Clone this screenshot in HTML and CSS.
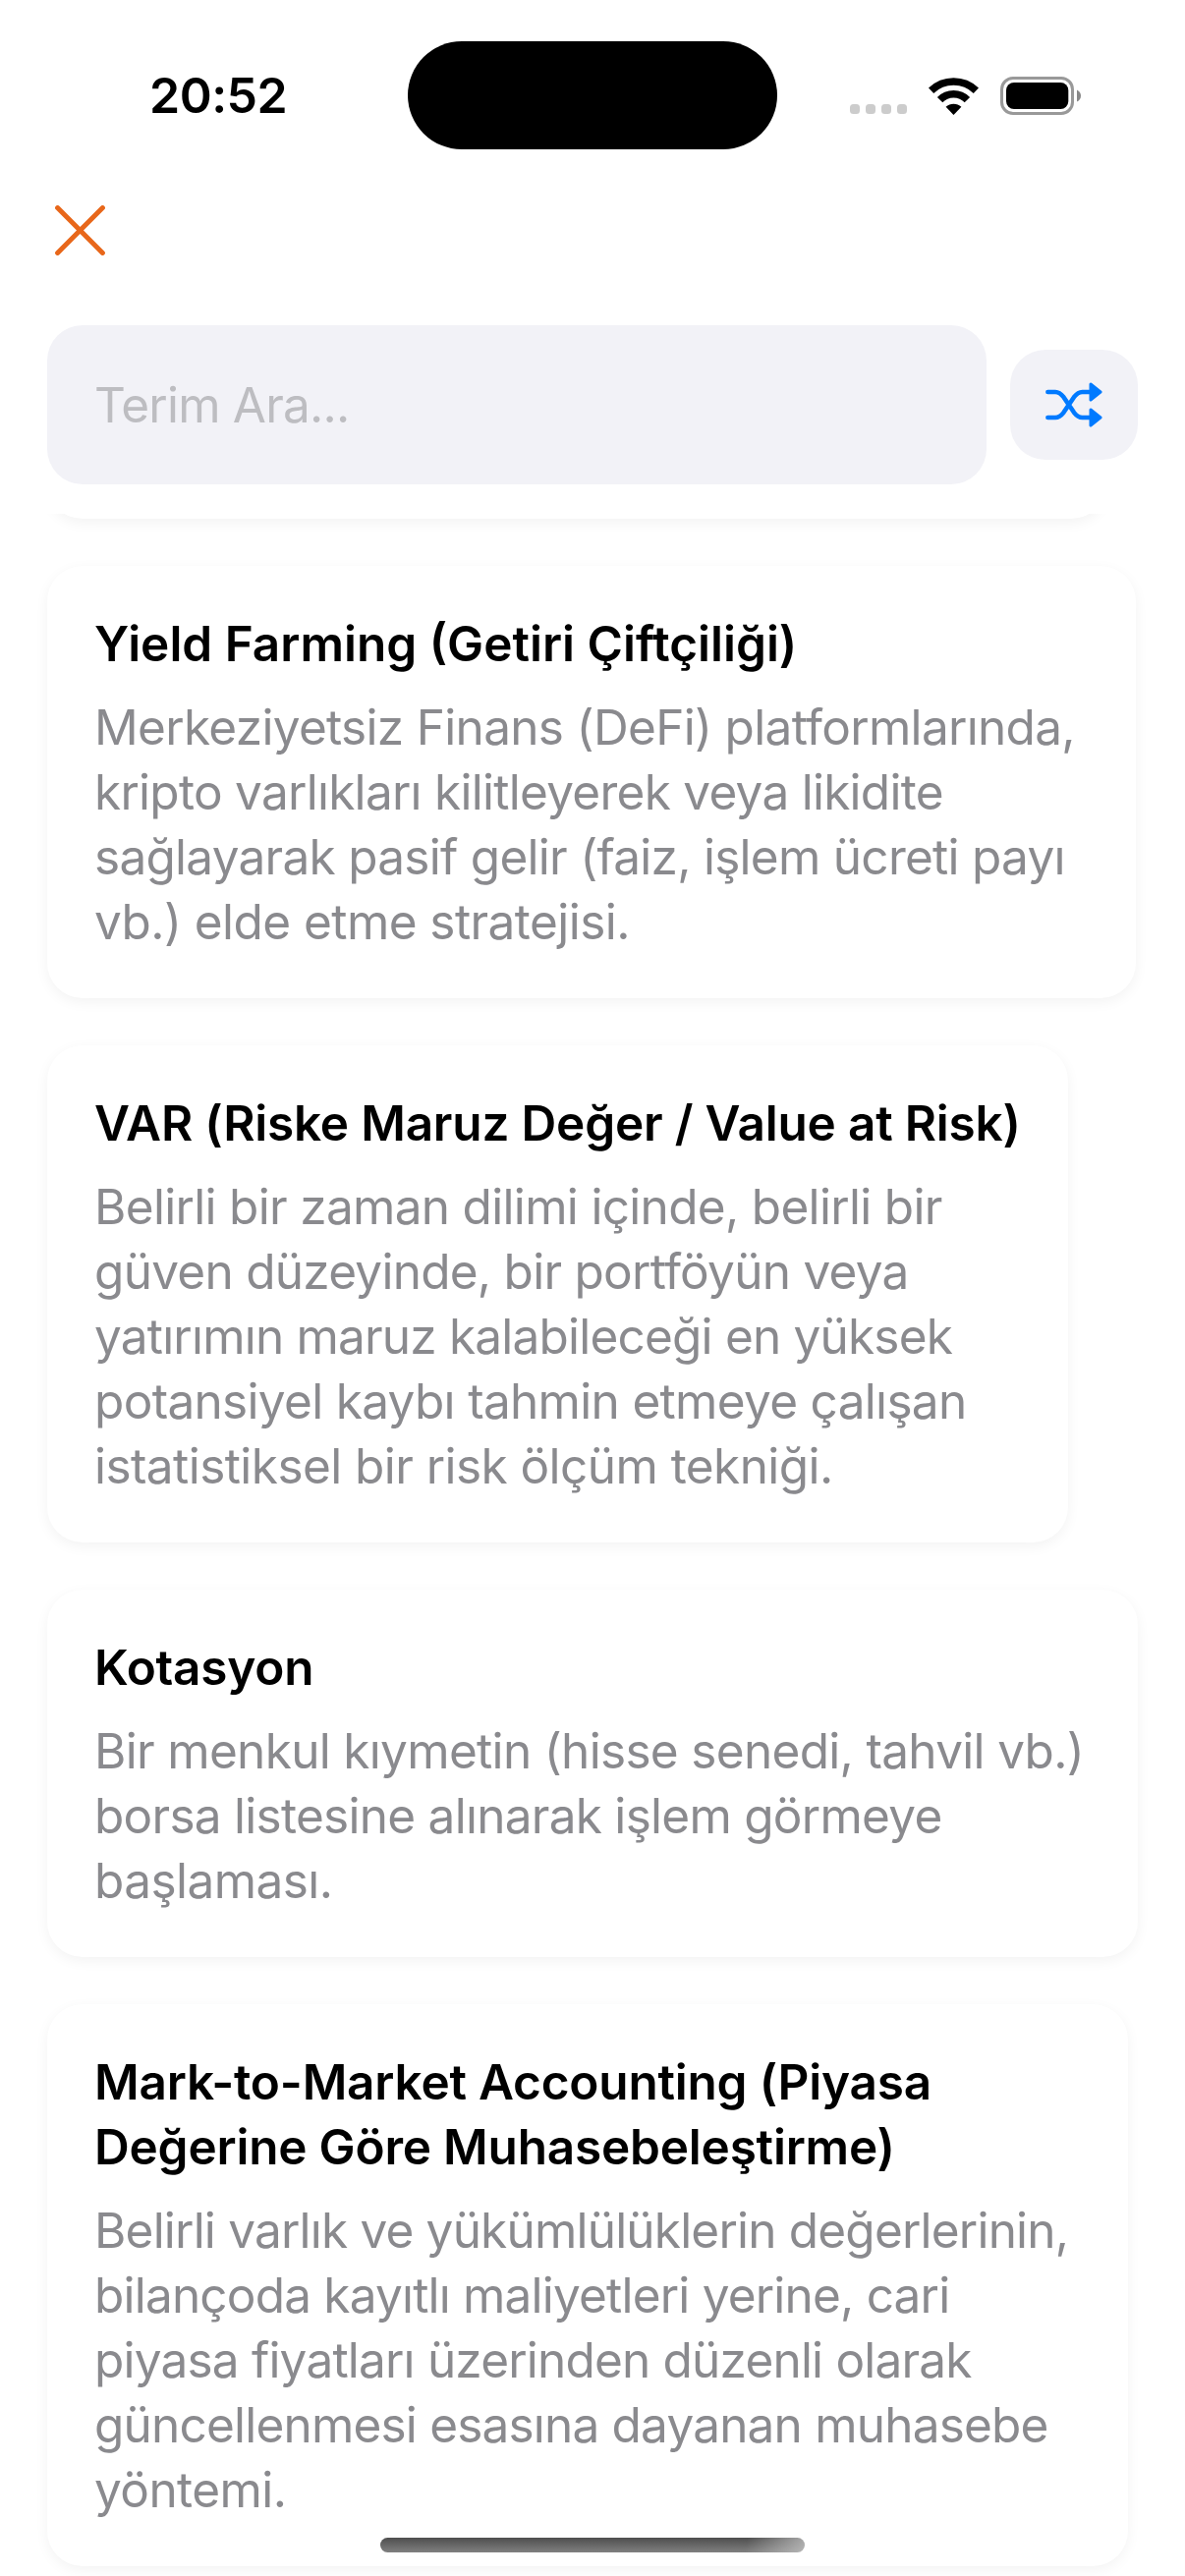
FILE: index.html
```html
<!DOCTYPE html>
<html lang="tr">
<head>
<meta charset="utf-8">
<title>Terimler</title>
<link rel="stylesheet" href="styles.css">
</head>
<body>
<div class="screen">
  <header class="status">
    <div class="time">20:52</div>
    <div class="island"></div>
    <div class="indicators">
      <div class="dots"><i></i><i></i><i></i><i></i></div>
      <svg class="wifi" width="51" height="38" viewBox="0 0 51 38">
        <g fill="none" stroke="#000" stroke-width="7.6">
          <path d="M2.6 13.2A33 33 0 0 1 48.4 13.2"/>
          <path d="M11.6 22.6A19.5 19.5 0 0 1 39.4 22.6"/>
        </g>
        <path d="M25.5 38L17.6 29.8A11.5 11.5 0 0 1 33.4 29.8Z"/>
      </svg>
      <svg class="battery" width="83" height="39" viewBox="0 0 83 39">
        <rect x="1.5" y="1.5" width="72" height="36" rx="11.5" fill="none" stroke="#999" stroke-width="3"/>
        <rect x="6" y="6" width="63.3" height="27" rx="8"/>
        <path d="M78 13.5Q82 15.5 82 19.5T78 25.5Z" fill="#888"/>
      </svg>
    </div>
  </header>
  <nav class="nav">
    <svg width="51" height="51" viewBox="0 0 51 51"><path d="M2.6 2.6L48.4 48.4M48.4 2.6L2.6 48.4" fill="none" stroke="#e8671a" stroke-width="5" stroke-linecap="round"/></svg>
  </nav>
  <div class="search">
    <div class="field">Terim Ara...</div>
    <div class="shuffle">
      <svg width="58" height="46" viewBox="0 0 58 46">
        <path d="M2.4 10H10C14 10 16 12 18.5 15.2L29 30.8C31.5 34 33.5 36 37.5 36H46M2.4 36H10C14 36 16 34 18.5 30.8L29 15.2C31.5 12 33.5 10 37.5 10H46" fill="none" stroke="#007aff" stroke-width="4.6" stroke-linecap="round" stroke-linejoin="round"/>
        <path d="M46 2L56 10L46 18ZM46 28L56 36L46 44Z" fill="#007aff" stroke="#007aff" stroke-width="3" stroke-linejoin="round"/>
      </svg>
    </div>
  </div>
  <main class="list">
    <article class="card card-scrolled"></article>
    <article class="card card-yield">
      <h2>Yield Farming (Getiri Çiftçiliği)</h2>
      <p><span class="snug">Merkeziyetsiz Finans (DeFi) platformlarında,</span><span class="snugger">kripto varlıkları kilitleyerek veya likidite</span><span class="snugger">sağlayarak pasif gelir (faiz, işlem ücreti payı</span><span class="loose">vb.) elde etme stratejisi.</span></p>
    </article>
    <article class="card card-var">
      <h2>VAR (Riske Maruz Değer / Value at Risk)</h2>
      <p><span class="snug">Belirli bir zaman dilimi içinde, belirli bir</span><span class="snugger">güven düzeyinde, bir portföyün veya</span><span class="tight">yatırımın maruz kalabileceği en yüksek</span><span class="snug">potansiyel kaybı tahmin etmeye çalışan</span><span class="loose">istatistiksel bir risk ölçüm tekniği.</span></p>
    </article>
    <article class="card card-quote">
      <h2>Kotasyon</h2>
      <p><span class="snug">Bir menkul kıymetin (hisse senedi, tahvil vb.)</span><span class="snugger">borsa listesine alınarak işlem görmeye</span><span class="loose">başlaması.</span></p>
    </article>
    <article class="card card-mtm">
      <h2>Mark-to-Market Accounting (Piyasa<br>Değerine Göre Muhasebeleştirme)</h2>
      <p><span class="tight">Belirli varlık ve yükümlülüklerin değerlerinin,</span><span class="tight">bilançoda kayıtlı maliyetleri yerine, cari</span><span class="tight">piyasa fiyatları üzerinden düzenli olarak</span><span class="tight">güncellenmesi esasına dayanan muhasebe</span><span class="loose">yöntemi.</span></p>
    </article>
  </main>
  <div class="home-bar"></div>
</div>
</body>
</html>
```
FILE: styles.css
```css
* { box-sizing: border-box; margin: 0; padding: 0; }

body {
  background: #fff;
  font-family: Inter, "Liberation Sans", sans-serif;
  font-size: 49.5px;
  line-height: 66px;
  color: #000;
}

.screen {
  position: relative;
  display: flex;
  flex-direction: column;
  width: 1206px;
  height: 2622px;
  overflow: hidden;
}

.status {
  display: grid;
  grid-template-columns: 415px 376px 1fr;
  height: 194px;
  padding-top: 42px;
}

.time {
  padding: 22px 0 0 152px;
  font-size: 50px;
  font-weight: 600;
  letter-spacing: -0.5px;
}

.island { height: 110px; border-radius: 55px; background: #000; }

.indicators {
  display: flex;
  align-items: flex-start;
  padding: 36px 0 0 74px;
}

.dots { display: flex; gap: 6px; margin-top: 28px; }
.dots i { width: 10px; height: 10px; border-radius: 3.5px; background: #ccc; }
.wifi { margin: 1px 0 0 22px; }
.battery { margin-left: 22px; }

.nav { height: 137px; padding: 15px 0 0 56px; }
.nav svg { display: block; }

.search {
  display: flex;
  align-items: center;
  gap: 24px;
  height: 162px;
  padding: 0 48px;
}

.field {
  width: 956px;
  height: 162px;
  padding: 48px 48px 0;
  border-radius: 36px;
  background: #f2f2f7;
  color: #bdbdc1;
  letter-spacing: -0.8px;
}

.shuffle {
  display: flex;
  align-items: center;
  justify-content: center;
  width: 130px;
  height: 112px;
  border-radius: 36px;
  background: #f2f2f7;
}

.list {
  display: flex;
  flex-direction: column;
  align-items: flex-start;
  gap: 48px;
  height: 2099px;
  margin-top: 30px;
  padding-left: 48px;
  overflow: hidden;
}

.card {
  flex: none;
  padding: 46px 0 45px 48px;
  border-radius: 36px;
  background: #fff;
  box-shadow: 0 4px 14px rgba(0, 0, 0, 0.05);
  white-space: nowrap;
}

.card h2 {
  margin-bottom: 19px;
  font-size: 49.5px;
  font-weight: 600;
  letter-spacing: -0.2px;
}

.card p { color: #8a8a8e; }
.card span { display: block; }

.loose { letter-spacing: -0.56px; }
.snug { letter-spacing: -0.68px; }
.snugger { letter-spacing: -0.73px; }
.tight { letter-spacing: -0.8px; }

.card-scrolled { width: 1078px; height: 120px; margin-top: -115px; }
.card-yield { width: 1108px; }
.card-yield h2 { letter-spacing: 0; }
.card-var { width: 1039px; }
.card-quote { width: 1110px; }
.card-mtm { width: 1100px; }

.home-bar {
  position: absolute;
  left: 387px;
  bottom: 24px;
  width: 432px;
  height: 15px;
  border-radius: 8px;
  background:
    linear-gradient(100deg, transparent 86%, rgba(200, 200, 200, 0.75) 100%),
    linear-gradient(#4e4e4e, #808080);
}
```
